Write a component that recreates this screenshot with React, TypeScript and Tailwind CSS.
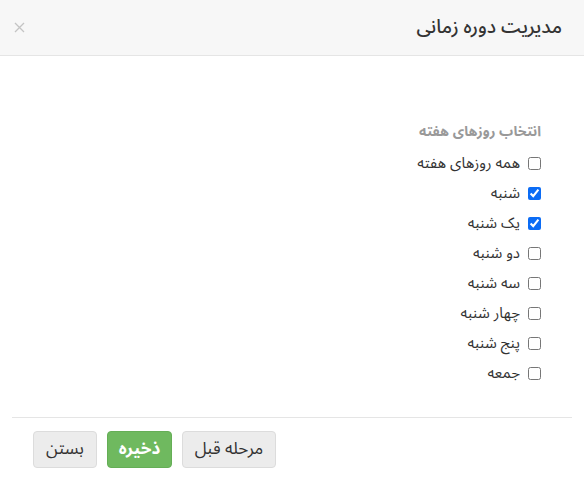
import React from "react";

const days: { label: string; checked: boolean }[] = [
  { label: "همه روزهای هفته", checked: false },
  { label: "شنبه", checked: true },
  { label: "یک شنبه", checked: true },
  { label: "دو شنبه", checked: false },
  { label: "سه شنبه", checked: false },
  { label: "چهار شنبه", checked: false },
  { label: "پنج شنبه", checked: false },
  { label: "جمعه", checked: false },
];

export default function App() {
  return (
    <div
      dir="rtl"
      className="w-[584px] h-[490px] bg-white text-[#333] overflow-hidden"
      style={{ fontFamily: '"Noto Sans Arabic", "Noto Sans", "DejaVu Sans", sans-serif' }}
    >
      <div className="h-[56px] bg-[#f7f7f7] border-b border-[#e5e5e5] flex items-center justify-between pr-[22px] pl-[13px]">
        <h4 className="text-[19px] font-medium leading-none text-[#333]">مدیریت دوره زمانی</h4>
        <button className="w-[12px] h-[12px] flex items-center justify-center">
          <svg width="11" height="11" viewBox="0 0 11 11">
            <path d="M1 1L10 10M10 1L1 10" stroke="#c4c4c4" strokeWidth="1.3" />
          </svg>
        </button>
      </div>
      <div className="mx-3 border-b border-[#e5e5e5] pt-[66px] pb-[29px] pr-[31px]">
        <div className="text-[14px] font-bold text-[#999] leading-[20px] mb-[6px]">انتخاب روزهای هفته</div>
        <div className="flex flex-col">
          {days.map((d) => (
            <label key={d.label} className="h-[30px] flex items-center gap-[8px] text-[15px] text-[#333]">
              <input type="checkbox" defaultChecked={d.checked} className="w-[13px] h-[13px] m-0 accent-[#0b6cf5]" />
              <span>{d.label}</span>
            </label>
          ))}
        </div>
      </div>
      <div className="flex justify-end gap-[10px] pl-[33px] pt-[13px]">
        <button className="w-[94px] h-[37px] rounded-[4px] bg-[#ececec] border border-[#dcdcdc] text-[17px] text-[#333]">
          مرحله قبل
        </button>
        <button className="w-[65px] h-[37px] rounded-[4px] bg-[#6fb95f] border border-[#65ae56] text-[17px] font-bold text-white">
          ذخیره
        </button>
        <button className="w-[64px] h-[37px] rounded-[4px] bg-[#ececec] border border-[#dcdcdc] text-[17px] text-[#333]">
          بستن
        </button>
      </div>
    </div>
  );
}
